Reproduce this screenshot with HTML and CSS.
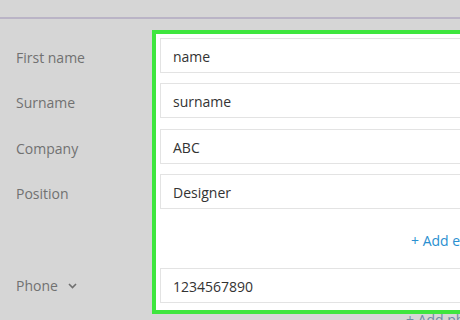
FILE: index.html
```html
<!DOCTYPE html>
<html>
<head>
<meta charset="utf-8">
<link rel="stylesheet" href="styles.css">
</head>
<body>
<div class="topbar"></div>
<div class="form">
  <div class="labels">
    <div class="label">First name</div>
    <div class="label">Surname</div>
    <div class="label">Company</div>
    <div class="label">Position</div>
    <div class="spacer"></div>
    <div class="label phone">Phone
      <svg class="chev" width="9" height="6" viewBox="0 0 9 6"><path d="M1 1 L4.5 4.5 L8 1" fill="none" stroke="#707070" stroke-width="1.6"/></svg>
    </div>
  </div>
  <div class="panel">
    <div class="field">name</div>
    <div class="field">surname</div>
    <div class="field">ABC</div>
    <div class="field">Designer</div>
    <div class="addrow"><span class="add">+ Add email</span></div>
    <div class="field last">1234567890</div>
  </div>
  <div class="below"><span class="add dim">+ Add phone</span></div>
</div>
</body>
</html>
```
FILE: styles.css
```css
html, body {
  margin: 0;
  padding: 0;
  background: #d6d6d6;
  width: 460px;
  height: 320px;
  overflow: hidden;
  font-family: "Open Sans", "Noto Sans", sans-serif;
  font-size: 14px;
}
.topbar {
  height: 17px;
  border-bottom: 2px solid #bab4c6;
}
.form {
  margin-top: 11px;
  display: grid;
  grid-template-columns: 152px 1fr;
}
.labels {
  padding-top: 10px;
  padding-left: 16px;
  display: flex;
  flex-direction: column;
}
.label {
  height: 35px;
  margin-bottom: 10.4px;
  color: #717171;
  display: flex;
  align-items: center;
}
.spacer { height: 46px; }
.chev { margin-left: 10px; margin-top: 2px; }
.panel {
  background: #fff;
  border: 4px solid #3ee63e;
  padding: 4px 0 7px 4px;
  overflow: hidden;
}
.field {
  height: 31px;
  line-height: 31px;
  padding-top: 2px;
  border: 1px solid #e3e3e3;
  border-right: none;
  padding-left: 12px;
  color: #333;
  margin-bottom: 10.4px;
  white-space: nowrap;
}
.field.last { margin-bottom: 0; }
.addrow {
  height: 48px;
  line-height: 41px;
  padding-left: 251px;
  white-space: nowrap;
}
.add {
  color: #2a8fd0;
  font-size: 14px;
}
.below {
  grid-column: 2;
  padding-left: 254px;
  height: 14px;
  line-height: 12px;
  white-space: nowrap;
}
.add.dim { color: #6e8ca3; }
```
